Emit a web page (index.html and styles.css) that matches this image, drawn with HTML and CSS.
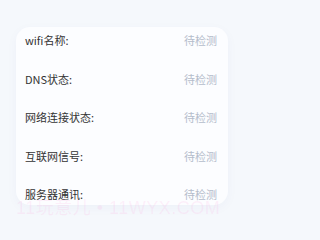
FILE: index.html
```html
<!DOCTYPE html>
<html lang="zh">
<head>
<meta charset="utf-8">
<link rel="stylesheet" href="styles.css">
</head>
<body>
<div class="page">
  <div class="card">
    <div class="row"><span class="label">wifi名称:</span><span class="value">待检测</span></div>
    <div class="row"><span class="label">DNS状态:</span><span class="value">待检测</span></div>
    <div class="row"><span class="label">网络连接状态:</span><span class="value">待检测</span></div>
    <div class="row"><span class="label">互联网信号:</span><span class="value">待检测</span></div>
    <div class="row"><span class="label">服务器通讯:</span><span class="value">待检测</span></div>
  </div>
  <div class="watermark">11玩意儿 • 11WYX.COM</div>
</div>
</body>
</html>
```
FILE: styles.css
```css
html, body {
  margin: 0;
  padding: 0;
  background: #f5f8fc;
}
.page {
  position: relative;
  width: 241px;
  height: 227px;
  padding: 27px 13px 0 16px;
  box-sizing: border-box;
  font-family: "Noto Sans CJK SC", "Noto Sans", sans-serif;
}
.card {
  background: #fcfdff;
  border-radius: 14px;
  box-shadow: 0 3px 12px rgba(40, 70, 130, 0.035);
  padding: 2px 11px 0 9px;
  display: flex;
  flex-direction: column;
  gap: 16.6px;
}
.row {
  flex: 0 0 22px;
  height: 22px;
  display: flex;
  align-items: center;
  justify-content: space-between;
  font-size: 11px;
}
.label {
  color: #333333;
}
.value {
  color: #b4bccb;
}
.watermark {
  position: absolute;
  left: 16px;
  top: 193px;
  font-family: "Liberation Sans", "Noto Sans CJK SC", sans-serif;
  font-size: 18px;
  letter-spacing: 0.5px;
  color: rgba(255, 140, 210, 0.12);
  white-space: nowrap;
  pointer-events: none;
}
```
